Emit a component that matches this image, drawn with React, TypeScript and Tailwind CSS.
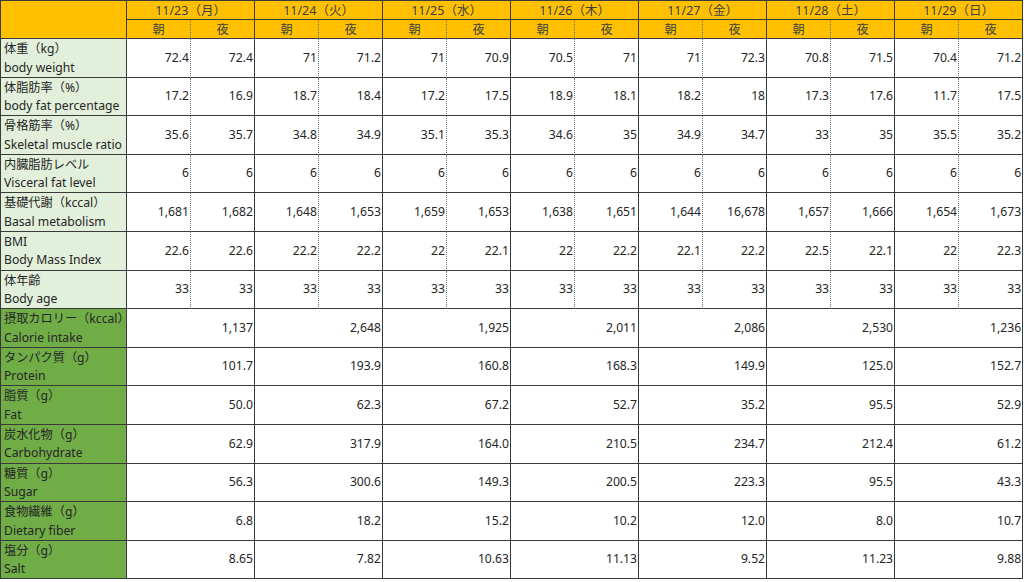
const days = ["11/23（月）", "11/24（火）", "11/25（水）", "11/26（木）", "11/27（金）", "11/28（土）", "11/29（日）"];

const bodyRows: { ja: string; en: string; values: string[] }[] = [
  { ja: "体重（kg）", en: "body weight", values: ["72.4", "72.4", "71", "71.2", "71", "70.9", "70.5", "71", "71", "72.3", "70.8", "71.5", "70.4", "71.2"] },
  { ja: "体脂肪率（%）", en: "body fat percentage", values: ["17.2", "16.9", "18.7", "18.4", "17.2", "17.5", "18.9", "18.1", "18.2", "18", "17.3", "17.6", "11.7", "17.5"] },
  { ja: "骨格筋率（%）", en: "Skeletal muscle ratio", values: ["35.6", "35.7", "34.8", "34.9", "35.1", "35.3", "34.6", "35", "34.9", "34.7", "33", "35", "35.5", "35.2"] },
  { ja: "内臓脂肪レベル", en: "Visceral fat level", values: Array(14).fill("6") },
  { ja: "基礎代謝（kccal）", en: "Basal metabolism", values: ["1,681", "1,682", "1,648", "1,653", "1,659", "1,653", "1,638", "1,651", "1,644", "16,678", "1,657", "1,666", "1,654", "1,673"] },
  { ja: "BMI", en: "Body Mass Index", values: ["22.6", "22.6", "22.2", "22.2", "22", "22.1", "22", "22.2", "22.1", "22.2", "22.5", "22.1", "22", "22.3"] },
  { ja: "体年齢", en: "Body age", values: Array(14).fill("33") },
];

const mealRows: { ja: string; en: string; values: string[] }[] = [
  { ja: "摂取カロリー（kccal）", en: "Calorie intake", values: ["1,137", "2,648", "1,925", "2,011", "2,086", "2,530", "1,236"] },
  { ja: "タンパク質（g）", en: "Protein", values: ["101.7", "193.9", "160.8", "168.3", "149.9", "125.0", "152.7"] },
  { ja: "脂質（g）", en: "Fat", values: ["50.0", "62.3", "67.2", "52.7", "35.2", "95.5", "52.9"] },
  { ja: "炭水化物（g）", en: "Carbohydrate", values: ["62.9", "317.9", "164.0", "210.5", "234.7", "212.4", "61.2"] },
  { ja: "糖質（g）", en: "Sugar", values: ["56.3", "300.6", "149.3", "200.5", "223.3", "95.5", "43.3"] },
  { ja: "食物繊維（g）", en: "Dietary fiber", values: ["6.8", "18.2", "15.2", "10.2", "12.0", "8.0", "10.7"] },
  { ja: "塩分（g）", en: "Salt", values: ["8.65", "7.82", "10.63", "11.13", "9.52", "11.23", "9.88"] },
];

function Label({ ja, en, dark }: { ja: string; en: string; dark?: boolean }) {
  return (
    <td
      className={`border-r border-b border-[#3a3a3a] px-[3px] align-top leading-[18.5px] ${
        dark ? "bg-[#70ad47]" : "bg-[#e2efda]"
      }`}
    >
      <div className="translate-y-[1px]">
        <div className="whitespace-nowrap">{ja}</div>
        <div className="whitespace-nowrap">{en}</div>
      </div>
    </td>
  );
}

export default function App() {
  return (
    <div className="w-[1024px] h-[582px] bg-white overflow-hidden text-[#262626] text-[12.2px] font-['Noto_Sans','Noto_Sans_CJK_JP',sans-serif]">
      <table className="table-fixed border-separate border-spacing-0 border-t border-l border-[#3a3a3a] w-[1022px]">
        <colgroup>
          <col className="w-[126px]" />
          {Array.from({ length: 14 }).map((_, i) => (
            <col key={i} className="w-[64px]" />
          ))}
        </colgroup>
        <thead>
          <tr className="h-[19px]">
            <th rowSpan={2} className="bg-[#ffc000] border-r border-b border-[#3a3a3a]" />
            {days.map((d) => (
              <th
                key={d}
                colSpan={2}
                className="bg-[#ffc000] border-r border-b border-[#3a3a3a] font-normal text-center leading-[17px] text-[12.5px] text-[#404040]"
              >
                {d}
              </th>
            ))}
          </tr>
          <tr className="h-[19px]">
            {days.map((d) => (
              <>
                <th
                  key={d + "am"}
                  className="bg-[#ffc000] border-r border-b border-[#3a3a3a] border-r-[#777] [border-right-style:dotted] font-normal text-center leading-[17px] text-[#404040]"
                >
                  朝
                </th>
                <th
                  key={d + "pm"}
                  className="bg-[#ffc000] border-r border-b border-[#3a3a3a] font-normal text-center leading-[17px] text-[#404040]"
                >
                  夜
                </th>
              </>
            ))}
          </tr>
        </thead>
        <tbody>
          {bodyRows.map((r) => (
            <tr key={r.en} className="h-[38.6px]">
              <Label ja={r.ja} en={r.en} />
              {r.values.map((v, i) => (
                <td
                  key={i}
                  className={`border-b border-r border-[#3a3a3a] text-right pr-[1px] align-middle ${
                    i % 2 === 0 ? "border-r-[#777] [border-right-style:dotted]" : ""
                  }`}
                >
                  {v}
                </td>
              ))}
            </tr>
          ))}
          {mealRows.map((r) => (
            <tr key={r.en} className="h-[38.6px]">
              <Label ja={r.ja} en={r.en} dark />
              {r.values.map((v, i) => (
                <td
                  key={i}
                  colSpan={2}
                  className="border-b border-r border-[#3a3a3a] text-right pr-[1px] align-middle"
                >
                  {v}
                </td>
              ))}
            </tr>
          ))}
        </tbody>
      </table>
    </div>
  );
}
